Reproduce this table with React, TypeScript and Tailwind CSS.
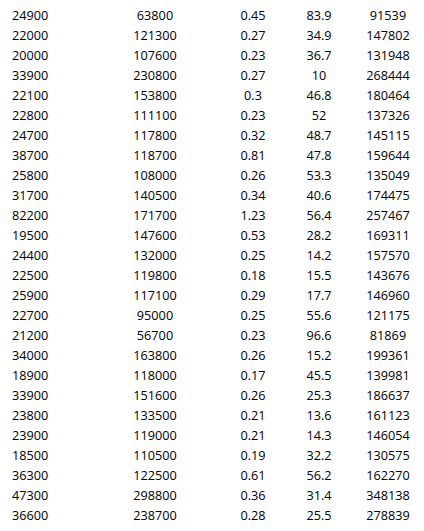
const rows: [string, string, string, string, string][] = [
  ["24900", "63800", "0.45", "83.9", "91539"],
  ["22000", "121300", "0.27", "34.9", "147802"],
  ["20000", "107600", "0.23", "36.7", "131948"],
  ["33900", "230800", "0.27", "10", "268444"],
  ["22100", "153800", "0.3", "46.8", "180464"],
  ["22800", "111100", "0.23", "52", "137326"],
  ["24700", "117800", "0.32", "48.7", "145115"],
  ["38700", "118700", "0.81", "47.8", "159644"],
  ["25800", "108000", "0.26", "53.3", "135049"],
  ["31700", "140500", "0.34", "40.6", "174475"],
  ["82200", "171700", "1.23", "56.4", "257467"],
  ["19500", "147600", "0.53", "28.2", "169311"],
  ["24400", "132000", "0.25", "14.2", "157570"],
  ["22500", "119800", "0.18", "15.5", "143676"],
  ["25900", "117100", "0.29", "17.7", "146960"],
  ["22700", "95000", "0.25", "55.6", "121175"],
  ["21200", "56700", "0.23", "96.6", "81869"],
  ["34000", "163800", "0.26", "15.2", "199361"],
  ["18900", "118000", "0.17", "45.5", "139981"],
  ["33900", "151600", "0.26", "25.3", "186637"],
  ["23800", "133500", "0.21", "13.6", "161123"],
  ["23900", "119000", "0.21", "14.3", "146054"],
  ["18500", "110500", "0.19", "32.2", "130575"],
  ["36300", "122500", "0.61", "56.2", "162270"],
  ["47300", "298800", "0.36", "31.4", "348138"],
  ["36600", "238700", "0.28", "25.5", "278839"],
];

export default function App() {
  return (
    <div className="w-[424px] h-[531px] overflow-hidden bg-white pt-[4.6px] text-black font-['Open_Sans',sans-serif] text-[12.7px]">
      <div className="grid grid-cols-[100px_110px_86px_46px_82px]">
        {rows.map((r, i) => (
          <div key={i} className="contents">
            <div className="h-5 leading-5 pl-3">{r[0]}</div>
            <div className="h-5 leading-5 text-center">{r[1]}</div>
            <div className="h-5 leading-5 text-center">{r[2]}</div>
            <div className="h-5 leading-5 text-center">{r[3]}</div>
            <div className="h-5 leading-5 text-center pl-[10px]">{r[4]}</div>
          </div>
        ))}
      </div>
    </div>
  );
}
